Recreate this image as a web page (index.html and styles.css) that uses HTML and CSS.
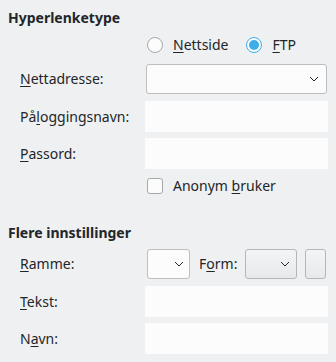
FILE: index.html
```html
<!DOCTYPE html>
<html>
<head>
<meta charset="utf-8">
<link rel="stylesheet" href="styles.css">
</head>
<body>
<div class="page">
  <div class="title t1">Hyperlenketype</div>

  <div class="row radios">
    <div class="label"></div>
    <div class="ctrl radio-group">
      <span class="radio"></span><span class="opt"><u>N</u>ettside</span>
      <span class="radio on"></span><span class="opt"><u>F</u>TP</span>
    </div>
  </div>

  <div class="row combo-row r-nett">
    <div class="label"><u>N</u>ettadresse:</div>
    <div class="ctrl">
      <div class="combo wide">
        <svg class="chev" width="10" height="6" viewBox="0 0 10 6"><path d="M1 1 L5 5 L9 1" fill="none" stroke="#232629" stroke-width="1"/></svg>
      </div>
    </div>
  </div>

  <div class="row field-row r-login">
    <div class="label">På<u>l</u>oggingsnavn:</div>
    <div class="ctrl"><div class="field"></div></div>
  </div>

  <div class="row field-row r-pass">
    <div class="label"><u>P</u>assord:</div>
    <div class="ctrl"><div class="field"></div></div>
  </div>

  <div class="row check-row">
    <div class="label"></div>
    <div class="ctrl check-group">
      <span class="check"></span><span class="opt">Anonym <u>b</u>ruker</span>
    </div>
  </div>

  <div class="title t2">Flere innstillinger</div>

  <div class="row combo-row r-ramme">
    <div class="label"><u>R</u>amme:</div>
    <div class="ctrl frame-ctrls">
      <div class="combo small">
        <svg class="chev" width="10" height="6" viewBox="0 0 10 6"><path d="M1 1 L5 5 L9 1" fill="none" stroke="#232629" stroke-width="1"/></svg>
      </div>
      <span class="form-label">F<u>o</u>rm:</span>
      <div class="combo btn form">
        <svg class="chev" width="10" height="6" viewBox="0 0 10 6"><path d="M1 1 L5 5 L9 1" fill="none" stroke="#232629" stroke-width="1"/></svg>
      </div>
      <div class="combo btn square"></div>
    </div>
  </div>

  <div class="row field-row r-tekst">
    <div class="label"><u>T</u>ekst:</div>
    <div class="ctrl"><div class="field"></div></div>
  </div>

  <div class="row field-row r-navn">
    <div class="label">N<u>a</u>vn:</div>
    <div class="ctrl"><div class="field"></div></div>
  </div>
</div>
</body>
</html>
```
FILE: styles.css
```css
html, body {
  margin: 0;
  padding: 0;
  background: #eff0f1;
}
body {
  font-family: "Noto Sans", "DejaVu Sans", sans-serif;
  font-size: 14px;
  color: #232629;
}
.page {
  width: 336px;
  height: 362px;
  display: flex;
  flex-direction: column;
  overflow: hidden;
}
u {
  text-decoration: underline;
  text-underline-offset: 2px;
}
.title {
  font-weight: bold;
  height: 18px;
  line-height: 18px;
  padding-left: 8px;
}
.t1 { margin-top: 9px; }
.t2 { margin-top: 28px; }

.row {
  display: flex;
  align-items: center;
}
.label {
  width: 125px;
  padding-left: 20px;
  flex: none;
  line-height: 18px;
  white-space: nowrap;
}
.ctrl {
  width: 183px;
  display: flex;
  align-items: center;
  height: 100%;
}
.radios { height: 20px; margin-top: 8px; }
.r-nett { height: 32px; margin-top: 8px; }
.r-login { height: 31px; margin-top: 6px; }
.r-pass { height: 31px; margin-top: 6px; }
.check-row { height: 20px; margin-top: 7px; }
.r-ramme { height: 32px; margin-top: 6px; }
.r-tekst { height: 31px; margin-top: 6px; }
.r-navn { height: 31px; margin-top: 6px; }

.field {
  width: 183px;
  height: 31px;
  background: #fcfcfc;
}

.radio-group, .check-group {
  padding-left: 2px;
}
.radio {
  box-sizing: border-box;
  width: 16px;
  height: 16px;
  border-radius: 50%;
  border: 1px solid #a5a7a9;
  background: #fcfcfc;
  margin-right: 10px;
  flex: none;
  position: relative;
}
.radio.on {
  border-color: #3daee9;
}
.radio.on::after {
  content: "";
  position: absolute;
  left: 2px;
  top: 2px;
  width: 10px;
  height: 10px;
  border-radius: 50%;
  background: #3daee9;
}
.opt {
  line-height: 18px;
  margin-right: 18px;
  white-space: nowrap;
}
.check {
  box-sizing: border-box;
  width: 16px;
  height: 16px;
  border-radius: 3px;
  border: 1px solid #a5a7a9;
  background: #fcfcfc;
  margin-right: 10px;
  flex: none;
}

.combo {
  box-sizing: border-box;
  height: 30px;
  border: 1px solid #bcbebf;
  border-radius: 3px;
  background: #fcfcfc;
  display: flex;
  align-items: center;
  justify-content: flex-end;
  flex: none;
}
.combo.wide {
  width: 181px;
  margin-left: 1px;
  padding-right: 7px;
}
.frame-ctrls {
  padding-left: 2px;
}
.combo.small {
  width: 43px;
  padding-right: 5px;
}
.form-label {
  margin-left: 9px;
  line-height: 18px;
  width: 46px;
  flex: none;
}
.combo.btn {
  background: linear-gradient(#f3f4f5, #e8e9ea);
  border-color: #b4b6b8;
}
.combo.form {
  width: 52px;
  padding-right: 6px;
}
.combo.square {
  width: 21px;
  margin-left: 8px;
}
.chev { display: block; }
```
